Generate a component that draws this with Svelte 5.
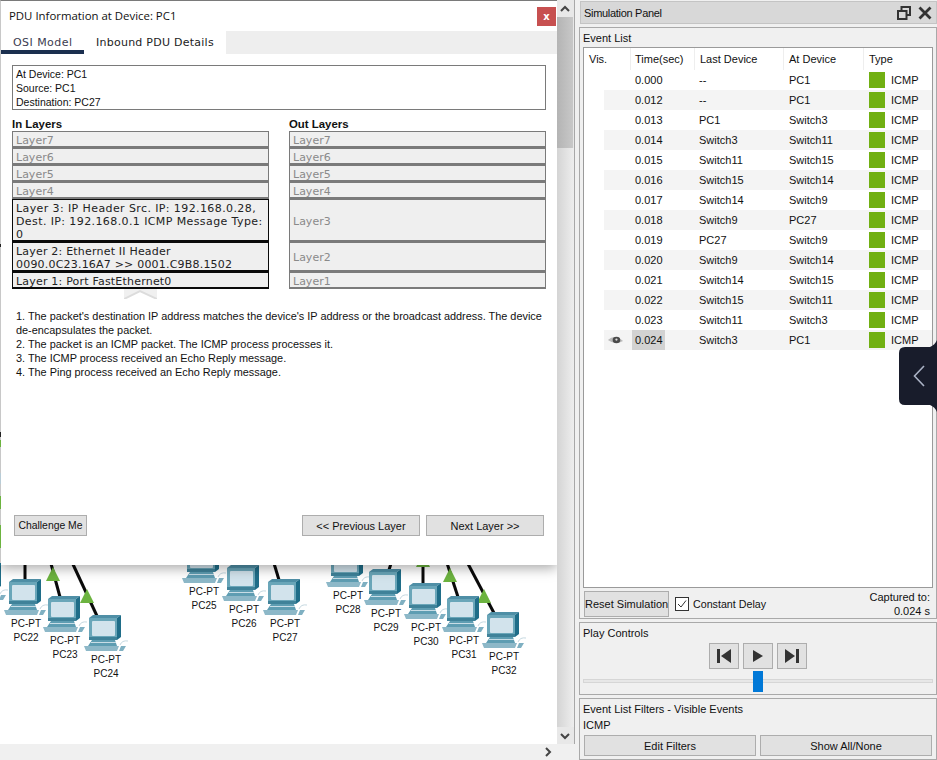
<script>
    const events = [
        ['0.000', '--', 'PC1'],
        ['0.012', '--', 'PC1'],
        ['0.013', 'PC1', 'Switch3'],
        ['0.014', 'Switch3', 'Switch11'],
        ['0.015', 'Switch11', 'Switch15'],
        ['0.016', 'Switch15', 'Switch14'],
        ['0.017', 'Switch14', 'Switch9'],
        ['0.018', 'Switch9', 'PC27'],
        ['0.019', 'PC27', 'Switch9'],
        ['0.020', 'Switch9', 'Switch14'],
        ['0.021', 'Switch14', 'Switch15'],
        ['0.022', 'Switch15', 'Switch11'],
        ['0.023', 'Switch11', 'Switch3'],
        ['0.024', 'Switch3', 'PC1']
    ];

    // position of each pc on the logical workspace
    const pcs = [
        { name: '', x: -36, y: 564 },
        { name: 'PC22', x: 4, y: 579 },
        { name: 'PC23', x: 43, y: 596 },
        { name: 'PC24', x: 84, y: 615 },
        { name: 'PC25', x: 182, y: 547 },
        { name: 'PC26', x: 222, y: 565 },
        { name: 'PC27', x: 263, y: 579 },
        { name: 'PC28', x: 326, y: 551 },
        { name: 'PC29', x: 364, y: 569 },
        { name: 'PC30', x: 404, y: 583 },
        { name: 'PC31', x: 442, y: 596 },
        { name: 'PC32', x: 482, y: 612 }
    ];

    const links = [
        [25, 560, 25, 580],
        [50, 560, 60, 597],
        [71, 560, 97, 616],
        [273, 560, 279, 580],
        [392, 560, 389, 570],
        [423, 560, 423, 584],
        [446, 560, 458, 597],
        [466, 560, 494, 613]
    ];

    const arrows = [[53, 567], [87, 589], [423, 553], [450, 568], [484, 589]];

    // bits of the workspace that show through the dialog's left edge
    const edgeMarks = [
        { y: 243, h: 3, color: '#222' },
        { y: 431, h: 5, color: '#222' },
        { y: 439, h: 7, color: '#6cb33f' },
        { y: 472, h: 11, color: '#b8ccd6' },
        { y: 495, h: 13, color: '#6cb33f' },
        { y: 524, h: 23, color: '#6cb33f' },
        { y: 562, h: 3, color: '#1f6d88' }
    ];

    const inLayers = [
        { text: 'Layer7', h: 17 },
        { text: 'Layer6', h: 17 },
        { text: 'Layer5', h: 17 },
        { text: 'Layer4', h: 17 },
        { text: 'Layer 3: IP Header Src. IP: 192.168.0.28, Dest. IP: 192.168.0.1 ICMP Message Type: 0', h: 43, on: true, wide: true },
        { text: 'Layer 2: Ethernet II Header\n0090.0C23.16A7 >> 0001.C9B8.1502', h: 30, on: true },
        { text: 'Layer 1: Port FastEthernet0', h: 17, on: true }
    ];

    const outLayers = [
        { text: 'Layer7', h: 17 },
        { text: 'Layer6', h: 17 },
        { text: 'Layer5', h: 17 },
        { text: 'Layer4', h: 17 },
        { text: 'Layer3', h: 43 },
        { text: 'Layer2', h: 30 },
        { text: 'Layer1', h: 17 }
    ];
</script>

<div class="app">
    <div class="left">
        <div class="left-top">
            <div class="canvas">
                <svg class="links" width="557" height="744">
                    {#each links as l}
                        <line x1={l[0]} y1={l[1]} x2={l[2]} y2={l[3]} stroke="#0a0a0a" stroke-width="3" />
                    {/each}
                    {#each arrows as a}
                        <polygon points="{a[0]},{a[1]} {a[0] + 7},{a[1] + 14} {a[0] - 7},{a[1] + 14}" fill="#6cb33f" />
                    {/each}
                </svg>

                {#each pcs as pc}
                    <div class="pc" style="left: {pc.x}px; top: {pc.y}px">
                        <svg width="44" height="36" viewBox="0 0 44 36">
                            <polygon points="5,3 9,0 37,0 33,3" fill="#4f8fa6" />
                            <rect x="5" y="3" width="28" height="22" fill="#6aa6b9" />
                            <polygon points="33,3 37,0 37,22 33,25" fill="#1f6d88" />
                            <rect x="8" y="6" width="23" height="15" rx="1" fill="#d2e3ec" />
                            <rect x="5" y="22" width="28" height="3" fill="#3f8299" />
                            <polygon points="8,25 31,25 33,31 4,31" fill="#5e9db2" />
                            <rect x="7" y="27" width="25" height="1" fill="#c8dde6" />
                            <polygon points="0,31 35,31 33,36 2,36" fill="#8db8c8" />
                            <path d="M36 30 q2 -5 8 -4" fill="none" stroke="#c5d8e0" stroke-width="1" />
                            <polygon points="37,31 42,31 39,36 35,36" fill="#7fb0c2" />
                        </svg>
                        {#if pc.name}
                            <div class="pc-label">PC-PT<br />{pc.name}</div>
                        {/if}
                    </div>
                {/each}

                <div class="dialog">
                    <div class="dialog-title">
                        <span>PDU Information at Device: PC1</span>
                        <button class="close">x</button>
                    </div>

                    <div class="tabs">
                        <div class="tab active">OSI Model</div>
                        <div class="tab">Inbound PDU Details</div>
                        <div class="tab-rest"></div>
                    </div>

                    <div class="info">
                        <div>At Device: PC1</div>
                        <div>Source: PC1</div>
                        <div>Destination: PC27</div>
                    </div>

                    <div class="layers">
                        <div class="layer-col">
                            <div class="layer-head">In Layers</div>
                            {#each inLayers as layer}
                                <div class="layer" class:on={layer.on} class:wide={layer.wide} style="height: {layer.h}px">{layer.text}</div>
                            {/each}
                        </div>
                        <div class="layer-col">
                            <div class="layer-head">Out Layers</div>
                            {#each outLayers as layer}
                                <div class="layer" style="height: {layer.h}px">{layer.text}</div>
                            {/each}
                        </div>
                    </div>

                    <div class="up-arrow">
                        <svg width="33" height="10"><rect width="33" height="10" fill="#f0f0f0" /><polyline points="0,10 16,2 33,10" fill="#fff" stroke="#dcdcdc" stroke-width="2" /></svg>
                    </div>

                    <div class="steps">
                        <div>1. The packet's destination IP address matches the device's IP address or the broadcast address. The device<br />de-encapsulates the packet.</div>
                        <div>2. The packet is an ICMP packet. The ICMP process processes it.</div>
                        <div>3. The ICMP process received an Echo Reply message.</div>
                        <div>4. The Ping process received an Echo Reply message.</div>
                    </div>

                    <div class="dialog-buttons">
                        <button class="btn challenge">Challenge Me</button>
                        <div class="spacer"></div>
                        <button class="btn layer-btn">&lt;&lt; Previous Layer</button>
                        <button class="btn layer-btn">Next Layer &gt;&gt;</button>
                    </div>

                    {#each edgeMarks as m}
                        <div class="edge-mark" style="top: {m.y}px; height: {m.h}px; background: {m.color}"></div>
                    {/each}
                </div>
            </div>

            <div class="vscroll">
                <svg class="scroll-arrow" width="16" height="16"><polyline points="4,10 8,6 12,10" fill="none" stroke="#444" stroke-width="2" /></svg>
                <div class="thumb"></div>
                <div class="track"></div>
                <svg class="scroll-arrow" width="16" height="16"><polyline points="4,6 8,10 12,6" fill="none" stroke="#444" stroke-width="2" /></svg>
            </div>
        </div>
        <div class="hscroll">
            <svg width="16" height="16"><polyline points="6,4 10,8 6,12" fill="none" stroke="#444" stroke-width="2" /></svg>
        </div>
    </div>

    <div class="panel">
        <div class="panel-title">
            <span>Simulation Panel</span>
            <div class="title-icons">
                <svg width="14" height="14" viewBox="0 0 14 14"><rect x="4.5" y="1" width="8.5" height="8" fill="none" stroke="#333" stroke-width="2" /><rect x="1" y="5" width="8.5" height="8" fill="#d8d8d8" stroke="#333" stroke-width="2" /></svg>
                <svg width="14" height="14" viewBox="0 0 14 14"><path d="M1.5 1.5 L12.5 12.5 M12.5 1.5 L1.5 12.5" stroke="#333" stroke-width="2.8" /></svg>
            </div>
        </div>

        <div class="box event-box">
            <div class="box-label">Event List</div>
            <div class="table">
                <div class="row head">
                    <div class="c-vis">Vis.</div>
                    <div class="c-time">Time(sec)</div>
                    <div class="c-last">Last Device</div>
                    <div class="c-at">At Device</div>
                    <div class="c-type">Type</div>
                </div>
                {#each events as e, i}
                    <div class="row">
                        <div class="c-vis"></div>
                        <div class="row-body" class:odd={i % 2 === 1}>
                            <div class="c-eye">
                                {#if i === events.length - 1}
                                    <svg width="17" height="12" viewBox="0 0 18 12">
                                        <path d="M1 6 Q8 -1 17 7 Q9 12 1 6 Z" fill="#b9b9b9" />
                                        <ellipse cx="10" cy="6" rx="4" ry="3.4" fill="#4a4a4a" />
                                        <circle cx="10" cy="5.6" r="1.2" fill="#ddd" />
                                    </svg>
                                {/if}
                            </div>
                            <div class="c-time" class:current={i === events.length - 1}>{e[0]}</div>
                            <div class="c-last">{e[1]}</div>
                            <div class="c-at">{e[2]}</div>
                            <div class="c-type"><span class="swatch"></span>ICMP</div>
                        </div>
                    </div>
                {/each}
            </div>
            <div class="sim-row">
                <button class="btn reset">Reset Simulation</button>
                <label class="check">
                    <svg width="14" height="14" viewBox="0 0 14 14"><rect x="0.5" y="0.5" width="13" height="13" fill="#fff" stroke="#333" /><polyline points="3,7 6,10 11,3.5" fill="none" stroke="#333" /></svg>
                    Constant Delay
                </label>
                <div class="captured">Captured to:<br />0.024 s</div>
            </div>
        </div>

        <div class="box play-box">
            <div class="box-label">Play Controls</div>
            <div class="play-buttons">
                <button class="btn play" aria-label="Back"><svg width="16" height="16" viewBox="0 0 16 16"><rect x="1" y="1" width="3" height="14" fill="#333" /><polygon points="15,1 15,15 5,8" fill="#333" /></svg></button>
                <button class="btn play" aria-label="Play"><svg width="16" height="16" viewBox="0 0 16 16"><polygon points="3,2 3,14 13,8" fill="#333" /></svg></button>
                <button class="btn play" aria-label="Forward"><svg width="16" height="16" viewBox="0 0 16 16"><polygon points="1,1 1,15 11,8" fill="#333" /><rect x="12" y="1" width="3" height="14" fill="#333" /></svg></button>
            </div>
            <div class="slider">
                <div class="slider-track"></div>
                <div class="slider-thumb"></div>
            </div>
        </div>

        <div class="box filter-box">
            <div class="box-label">Event List Filters - Visible Events</div>
            <div class="filter-value">ICMP</div>
            <div class="filter-buttons">
                <button class="btn">Edit Filters</button>
                <button class="btn">Show All/None</button>
            </div>
        </div>
    </div>

    <svg class="side-tab" width="38" height="72" viewBox="0 0 38 72">
        <path d="M38 0 Q36 5 31 7 L6 7 Q0 7 0 13 L0 59 Q0 65 6 65 L31 65 Q36 67 38 72 Z" fill="#181c2b" />
        <polyline points="25,26 15.5,36 25,46" fill="none" stroke="#aab2c5" stroke-width="1.6" />
    </svg>
</div>

<style>
    :global(body) {
        margin: 0;
        background: #f0f0f0;
    }

    .app {
        position: relative;
        width: 937px;
        height: 760px;
        display: flex;
        overflow: hidden;
        font-family: "Liberation Sans", Arial, sans-serif;
        font-size: 11px;
        color: #111;
        background: #f0f0f0;
    }

    button {
        font-family: inherit;
        font-size: 11px;
        color: #111;
        margin: 0;
        padding: 0;
        white-space: nowrap;
    }

    .btn {
        background: #e1e1e1;
        border: 1px solid #adadad;
        border-radius: 0;
    }

    /* left side, workspace */
    .left {
        width: 579px;
        flex: none;
        display: flex;
        flex-direction: column;
    }

    .left-top {
        height: 744px;
        display: flex;
    }

    .canvas {
        position: relative;
        width: 557px;
        height: 744px;
        flex: none;
        background: #fff;
        overflow: hidden;
    }

    .links {
        position: absolute;
        left: 0;
        top: 0;
    }

    .pc {
        position: absolute;
        width: 44px;
    }

    .pc svg {
        display: block;
    }

    .pc-label {
        width: 44px;
        padding-top: 2px;
        text-align: center;
        line-height: 14px;
        font-size: 10px;
        white-space: nowrap;
    }

    .dialog {
        position: absolute;
        left: 0;
        top: 0;
        width: 557px;
        height: 565px;
        box-sizing: border-box;
        background: #fff;
        border-top: 1px solid #7a7a7a;
        border-left: 1px solid #c8c8c8;
        box-shadow: 0 3px 12px rgba(0, 0, 0, 0.35);
        display: flex;
        flex-direction: column;
    }

    .edge-mark {
        position: absolute;
        left: -1px;
        width: 1px;
    }

    .dialog-title {
        height: 30px;
        flex: none;
        display: flex;
        align-items: center;
        justify-content: space-between;
        padding: 0 1px 0 8px;
        font-family: "Open Sans", sans-serif;
        font-size: 11.4px;
    }

    .dialog-title span {
        margin-top: -2px;
    }

    .close {
        width: 19px;
        height: 19px;
        margin-top: 1px;
        background: #c75050;
        border: none;
        color: #fff;
        font-family: "DejaVu Sans", sans-serif;
        font-size: 10px;
        font-weight: bold;
    }

    .tabs {
        height: 23px;
        flex: none;
        display: flex;
        font-family: "DejaVu Sans", sans-serif;
        font-size: 11px;
        letter-spacing: 0.25px;
    }

    .tab {
        width: 142px;
        line-height: 24px;
        padding-left: 12px;
        box-sizing: border-box;
        color: #222;
    }

    .tab.active {
        width: 83px;
        padding-left: 12px;
        border-bottom: 4px solid #1b2f4f;
        line-height: 23px;
        color: #3c3c50;
        letter-spacing: 0.45px;
    }

    .tab-rest {
        flex: 1;
        background: #eeeeee;
    }

    .info {
        height: 45px;
        box-sizing: border-box;
        margin: 11px 11px 0 11px;
        flex: none;
        border: 1px solid #7a7a7a;
        padding: 1px 3px;
        line-height: 14px;
        font-size: 10.5px;
    }

    .layers {
        flex: none;
        display: flex;
        gap: 20px;
        margin: 8px 10px 0 11px;
    }

    .layer-col {
        width: 257px;
    }

    .layer-head {
        height: 13px;
        line-height: 13px;
        font-weight: bold;
        font-size: 11.4px;
    }

    .layer {
        box-sizing: border-box;
        background: #efefef;
        border: 1px solid #7a7a7a;
        border-bottom-width: 2px;
        padding: 2px 3px 0;
        display: flex;
        align-items: center;
        font-family: "DejaVu Sans", sans-serif;
        font-size: 11px;
        line-height: 13px;
        color: #8a8a8a;
        white-space: pre-line;
    }

    .layer.on {
        color: #222;
        border-color: #0a0a0a;
        letter-spacing: 0.2px;
    }

    .layer.on.wide {
        letter-spacing: 0.4px;
    }

    .up-arrow {
        height: 10px;
        margin-left: 123px;
        flex: none;
    }

    .up-arrow svg {
        display: block;
    }

    .steps {
        margin: 10px 10px 0 15px;
        line-height: 14px;
        font-size: 10.9px;
        flex: none;
    }

    .dialog-buttons {
        margin-top: auto;
        margin-bottom: 29px;
        padding: 0 13px 0 13px;
        display: flex;
        gap: 6px;
    }

    .spacer {
        flex: 1;
    }

    .challenge {
        width: 73px;
        height: 21px;
        font-size: 10.4px;
    }

    .layer-btn {
        width: 118px;
        height: 21px;
    }

    /* scrollbars */
    .vscroll {
        width: 18px;
        flex: none;
        display: flex;
        flex-direction: column;
        box-sizing: border-box;
        background: #e8e8e8;
        border-right: 1px solid #a8a8a8;
    }

    .scroll-arrow {
        display: block;
        flex: none;
        margin: 1px 0 0;
    }

    .thumb {
        width: 16px;
        height: 131px;
        flex: none;
        background: linear-gradient(90deg, #b4b4b4, #c8c8c8);
    }

    .track {
        width: 17px;
        flex: 1;
        background: linear-gradient(90deg, #d4d4d4, #eeeeee);
    }

    .hscroll {
        height: 16px;
        display: flex;
        justify-content: flex-end;
        padding-right: 23px;
    }

    /* simulation panel */
    .panel {
        flex: 1;
        display: flex;
        flex-direction: column;
        padding-top: 1px;
        gap: 3px;
    }

    .panel-title {
        height: 23px;
        flex: none;
        margin-left: 1px;
        box-sizing: border-box;
        background: #d8d8d8;
        border: 1px solid #c4c4c4;
        display: flex;
        align-items: center;
        justify-content: space-between;
        padding: 0 4px 0 3px;
        letter-spacing: -0.3px;
    }

    .title-icons {
        display: flex;
        gap: 7px;
    }

    .box {
        box-sizing: border-box;
        margin-left: 0;
        border: 1px solid #a9a9a9;
        flex: none;
        position: relative;
    }

    .box-label {
        padding-left: 3px;
        line-height: 14px;
    }

    .event-box {
        height: 592px;
        padding-top: 3px;
    }

    .table {
        height: 541px;
        box-sizing: border-box;
        margin: 2px 3px 0 3px;
        background: #fff;
        border: 1px solid #9a9a9a;
    }

    .row {
        display: flex;
        height: 20px;
        line-height: 20px;
    }

    .row.head {
        height: 22px;
        line-height: 23px;
    }

    .row-body {
        flex: 1;
        display: flex;
    }

    .row-body.odd {
        background: #f4f4f4;
    }

    .c-vis {
        width: 20px;
        flex: none;
    }

    .head .c-vis {
        width: 47px;
        padding-left: 5px;
        box-sizing: border-box;
        border-right: 1px solid #eee;
    }

    .c-eye {
        width: 28px;
        flex: none;
        box-sizing: border-box;
        padding-left: 3px;
        display: flex;
        align-items: center;
    }

    .c-time {
        flex: none;
        box-sizing: border-box;
    }

    .head .c-time {
        width: 64px;
        padding-left: 4px;
        border-right: 1px solid #eee;
    }

    .row-body .c-time {
        width: 33px;
        padding-left: 3px;
    }

    .row-body .c-time.current {
        background: #d2d2d2;
    }

    .c-last {
        width: 89px;
        padding-left: 5px;
        flex: none;
        box-sizing: border-box;
    }

    .row-body .c-last {
        margin-left: 30px;
        width: 90px;
        padding-left: 4px;
    }

    .c-at {
        width: 80px;
        padding-left: 5px;
        flex: none;
        box-sizing: border-box;
    }

    .row-body .c-at {
        padding-left: 4px;
    }

    .head .c-last,
    .head .c-at {
        border-right: 1px solid #eee;
    }

    .c-type {
        flex: 1;
        padding-left: 5px;
        display: flex;
        align-items: center;
    }

    .row-body .c-type {
        padding-left: 4px;
    }

    .swatch {
        width: 16px;
        height: 16px;
        margin-right: 6px;
        background: #71b012;
    }

    .sim-row {
        display: flex;
        align-items: center;
        height: 30px;
        margin-top: 1px;
        padding: 0 3px 0 4px;
    }

    .reset {
        width: 85px;
        height: 26px;
        flex: none;
    }

    .check {
        display: flex;
        align-items: center;
        gap: 4px;
        margin-left: 6px;
        font-size: 10.7px;
    }

    .check svg {
        display: block;
    }

    .captured {
        margin-left: auto;
        text-align: right;
        line-height: 14px;
        padding-right: 3px;
    }

    .play-box {
        height: 73px;
        padding-top: 3px;
    }

    .play-buttons {
        display: flex;
        justify-content: center;
        gap: 4px;
        margin-top: 3px;
        margin-left: 0;
        padding-right: 1px;
    }

    .play {
        width: 30px;
        height: 26px;
        display: flex;
        align-items: center;
        justify-content: center;
    }

    .slider {
        position: relative;
        height: 21px;
        margin: 2px 3px 0;
    }

    .slider-track {
        position: absolute;
        left: 0;
        right: 0;
        top: 8px;
        height: 4px;
        background: #e7e7e7;
        border: 1px solid #d6d6d6;
        box-sizing: border-box;
    }

    .slider-thumb {
        position: absolute;
        left: 170px;
        top: 0;
        width: 10px;
        height: 21px;
        background: #0078d7;
    }

    .filter-box {
        height: 62px;
        padding-top: 3px;
    }

    .filter-value {
        padding-left: 3px;
        margin-top: 2px;
        line-height: 14px;
    }

    .filter-buttons {
        display: flex;
        gap: 4px;
        margin: 3px 4px 0;
    }

    .filter-buttons .btn {
        flex: 1;
        height: 21px;
    }

    .side-tab {
        position: absolute;
        left: 899px;
        top: 340px;
    }
</style>
